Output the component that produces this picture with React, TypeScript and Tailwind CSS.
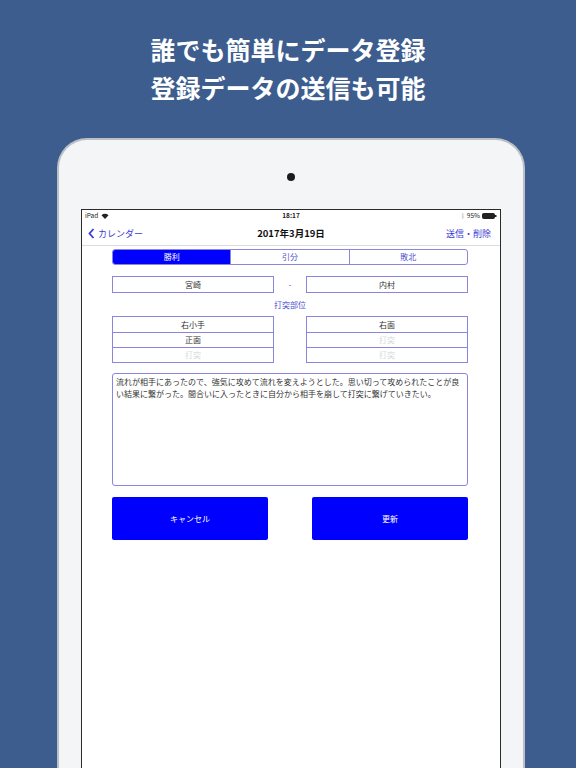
const jp = { fontFamily: '"Noto Sans CJK JP", "Noto Sans", sans-serif' };

function Wifi() {
  return (
    <svg width="8" height="6" viewBox="0 0 8 6" className="ml-[3px]">
      <path d="M0.5 2.2 A5 5 0 0 1 7.5 2.2 L4 6 Z" fill="#222" />
    </svg>
  );
}

function Battery() {
  return (
    <svg width="15" height="6" viewBox="0 0 15 6" className="ml-[2px]">
      <rect x="0.5" y="0.5" width="12" height="5" rx="1" fill="#222" stroke="#222" />
      <rect x="13" y="2" width="1.5" height="2" fill="#222" />
    </svg>
  );
}

function ListBox({ items }: { items: { t: string; dim?: boolean }[] }) {
  return (
    <div className="w-[162px] border border-[#8a86dc] flex flex-col">
      {items.map((it, i) => (
        <div
          key={i}
          className={
            'h-[15px] flex items-center justify-center text-[8px] ' +
            (i > 0 ? 'border-t border-[#8a86dc] ' : '') +
            (it.dim ? 'text-[#d8d8dc]' : 'text-[#333]')
          }
        >
          {it.t}
        </div>
      ))}
    </div>
  );
}

export default function App() {
  return (
    <div className="w-[576px] h-[768px] bg-[#3c5d8e] overflow-hidden flex flex-col" style={jp}>
      <div className="pt-[30px] text-center text-white font-bold text-[25px] leading-[38px]">
        <div>誰でも簡単にデータ登録</div>
        <div>登録データの送信も可能</div>
      </div>

      <div className="mt-[32px] ml-[57px] w-[468px] h-[660px] shrink-0 rounded-t-[30px] bg-[#f4f5f6] border-[2px] border-[#bcc0c6] border-b-0 flex flex-col">
        <div className="h-[69px] flex justify-center pt-[33px]">
          <div className="w-[8px] h-[8px] rounded-full bg-[#1c1c1e]" />
        </div>

        <div className="ml-[22px] w-[420px] flex-1 border-[1.5px] border-[#2a2a2a] border-b-0 bg-white flex flex-col">
          {/* status bar */}
          <div className="h-[12px] px-[3px] flex items-center justify-between text-[6.5px] text-[#222]">
            <div className="flex items-center w-[60px]">
              <span>iPad</span>
              <Wifi />
            </div>
            <div className="font-bold">18:17</div>
            <div className="flex items-center justify-end w-[60px]">
              <span className="text-[#999] mr-[2px]">ᛒ</span>
              <span>95%</span>
              <Battery />
            </div>
          </div>

          {/* nav bar */}
          <div className="h-[24px] px-[6px] flex items-center justify-between border-b border-[#dcdce0]">
            <div className="flex items-center text-[#3b3bd4] text-[9px] w-[90px]">
              <svg width="7" height="11" viewBox="0 0 7 11" className="mr-[3px]">
                <path d="M5.5 1 L1.5 5.5 L5.5 10" fill="none" stroke="#3b3bd4" strokeWidth="1.8" />
              </svg>
              <span>カレンダー</span>
            </div>
            <div className="text-[9.5px] font-bold text-[#111]">2017年3月19日</div>
            <div className="text-[#3b3bd4] text-[9px] w-[90px] text-right pr-[3px]">送信・削除</div>
          </div>

          <div className="ml-[30px] w-[356px] flex flex-col">
            {/* segmented control */}
            <div className="mt-[3px] h-[16px] flex border border-[#8a86dc] rounded-[3px] overflow-hidden text-[8px]">
              <div className="flex-1 bg-[#0000ff] text-white flex items-center justify-center">勝利</div>
              <div className="flex-1 border-l border-[#8a86dc] text-[#5050d0] flex items-center justify-center">引分</div>
              <div className="flex-1 border-l border-[#8a86dc] text-[#5050d0] flex items-center justify-center">敗北</div>
            </div>

            {/* names */}
            <div className="mt-[11px] flex items-center justify-between">
              <div className="w-[162px] h-[17px] border border-[#8a86dc] flex items-center justify-center text-[8px] text-[#333]">宮崎</div>
              <div className="text-[8px] text-[#5050d0]">-</div>
              <div className="w-[162px] h-[17px] border border-[#8a86dc] flex items-center justify-center text-[8px] text-[#333]">内村</div>
            </div>

            <div className="mt-[6px] h-[12px] text-center text-[8px] leading-[12px] text-[#5050d0]">打突部位</div>

            {/* strike parts */}
            <div className="mt-[5px] flex justify-between">
              <ListBox items={[{ t: '右小手' }, { t: '正面' }, { t: '打突', dim: true }]} />
              <ListBox items={[{ t: '右面' }, { t: '打突', dim: true }, { t: '打突', dim: true }]} />
            </div>

            {/* comment */}
            <div className="mt-[10px] h-[113px] border border-[#8a86dc] rounded-[3px] px-[3px] pt-[2px] text-[8px] leading-[12px] text-[#333]">
              流れが相手にあったので、強気に攻めて流れを変えようとした。思い切って攻められたことが良
              <br />
              い結果に繋がった。間合いに入ったときに自分から相手を崩して打突に繋げていきたい。
            </div>

            {/* buttons */}
            <div className="mt-[11px] flex justify-between">
              <div className="w-[156px] h-[43px] bg-[#0000ff] rounded-[2px] flex items-center justify-center text-white text-[8px]">キャンセル</div>
              <div className="w-[156px] h-[43px] bg-[#0000ff] rounded-[2px] flex items-center justify-center text-white text-[8px]">更新</div>
            </div>
          </div>
        </div>
      </div>
    </div>
  );
}
